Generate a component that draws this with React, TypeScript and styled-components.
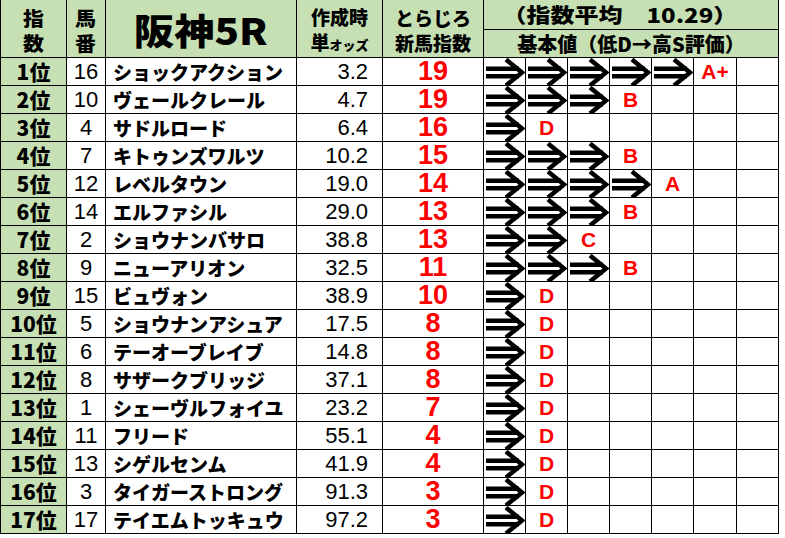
import React from "react";
import styled, { createGlobalStyle } from "styled-components";

const GREEN = "#c6e0b4";
const RED = "#ff0000";
const JP = `"Noto Sans CJK JP", "Noto Sans", sans-serif`;
const NUM = `"Liberation Sans", Arial, sans-serif`;

const GlobalStyle = createGlobalStyle`
  html, body { margin: 0; padding: 0; background: #fff; }
`;

const Sheet = styled.div`
  display: grid;
  grid-template-columns: 65px 38px 190px 85px 100px 41px 41px 41px 41px 41px 42px 41px;
  grid-template-rows: 29px 27px;
  grid-auto-rows: 27px;
  gap: 1px;
  background: #000;
  padding: 0 1px 1px 1px;
  width: max-content;
`;

const Cell = styled.div`
  display: flex;
  align-items: center;
  justify-content: center;
  background: #fff;
  color: #000;
  white-space: nowrap;
  line-height: 1;
`;

const HeadCell = styled(Cell)`
  grid-row: span 2;
  background: ${GREEN};
  flex-direction: column;
  font-family: ${JP};
  font-weight: 900;
  font-size: 19px;
  line-height: 25px;
  padding-top: 3px;
`;

const TitleCell = styled(HeadCell)`
  font-size: 36px;
  line-height: 1;
  padding-top: 0;
`;

const WideHead = styled(Cell)<{ $shift?: number }>`
  grid-column: span 7;
  background: ${GREEN};
  font-family: ${JP};
  font-weight: 900;
  font-size: 20px;
  padding-right: ${(p) => p.$shift ?? 0}px;
`;

const Stretch = styled.span<{ $sx: number; $origin?: string }>`
  display: inline-block;
  transform: scaleX(${(p) => p.$sx});
  transform-origin: ${(p) => p.$origin ?? "center"};
`;

const Small = styled.span`
  font-size: 13px;
`;

const RankCell = styled(Cell)`
  background: ${GREEN};
  font-family: ${JP};
  font-weight: 900;
  font-size: 21px;
`;

const NoCell = styled(Cell)`
  font-family: ${NUM};
  font-size: 22px;
`;

const NameCell = styled(Cell)`
  justify-content: flex-start;
  padding-left: 7px;
  font-family: ${JP};
  font-weight: 900;
  font-size: 19px;
  overflow: hidden;
`;

const OddsCell = styled(Cell)`
  justify-content: flex-end;
  padding-right: 14px;
  font-family: ${NUM};
  font-size: 22px;
`;

const IndexCell = styled(Cell)`
  font-family: ${NUM};
  font-weight: 700;
  font-size: 27px;
  color: ${RED};
`;

const MarkCell = styled(Cell)`
  font-family: ${NUM};
  font-weight: 700;
  font-size: 21px;
  color: ${RED};
  overflow: visible;
`;

const ArrowSvg = styled.svg`
  display: block;
  overflow: visible;
`;

const Arrow = () => (
  <ArrowSvg width="41" height="27" viewBox="0 0 41 27">
    <rect x="2" y="8.5" width="33" height="4.5" fill="#000" />
    <rect x="2" y="16" width="33" height="4.5" fill="#000" />
    <polyline
      points="22,1.5 38,14.5 22,27.5"
      fill="none"
      stroke="#000"
      strokeWidth="4.5"
      strokeLinejoin="miter"
    />
  </ArrowSvg>
);

type Row = {
  no: number;
  name: string;
  odds: string;
  index: number;
  arrows: number;
  grade: string;
};

const rows: Row[] = [
  { no: 16, name: "ショックアクション", odds: "3.2", index: 19, arrows: 5, grade: "A+" },
  { no: 10, name: "ヴェールクレール", odds: "4.7", index: 19, arrows: 3, grade: "B" },
  { no: 4, name: "サドルロード", odds: "6.4", index: 16, arrows: 1, grade: "D" },
  { no: 7, name: "キトゥンズワルツ", odds: "10.2", index: 15, arrows: 3, grade: "B" },
  { no: 12, name: "レベルタウン", odds: "19.0", index: 14, arrows: 4, grade: "A" },
  { no: 14, name: "エルファシル", odds: "29.0", index: 13, arrows: 3, grade: "B" },
  { no: 2, name: "ショウナンバサロ", odds: "38.8", index: 13, arrows: 2, grade: "C" },
  { no: 9, name: "ニューアリオン", odds: "32.5", index: 11, arrows: 3, grade: "B" },
  { no: 15, name: "ビュヴォン", odds: "38.9", index: 10, arrows: 1, grade: "D" },
  { no: 5, name: "ショウナンアシュア", odds: "17.5", index: 8, arrows: 1, grade: "D" },
  { no: 6, name: "テーオーブレイブ", odds: "14.8", index: 8, arrows: 1, grade: "D" },
  { no: 8, name: "サザークブリッジ", odds: "37.1", index: 8, arrows: 1, grade: "D" },
  { no: 1, name: "シェーヴルフォイユ", odds: "23.2", index: 7, arrows: 1, grade: "D" },
  { no: 11, name: "フリード", odds: "55.1", index: 4, arrows: 1, grade: "D" },
  { no: 13, name: "シゲルセンム", odds: "41.9", index: 4, arrows: 1, grade: "D" },
  { no: 3, name: "タイガーストロング", odds: "91.3", index: 3, arrows: 1, grade: "D" },
  { no: 17, name: "テイエムトッキュウ", odds: "97.2", index: 3, arrows: 1, grade: "D" },
];

const MARK_COLS = 7;

export default function App() {
  return (
    <>
      <GlobalStyle />
      <Sheet>
        <HeadCell>
          <Stretch $sx={1.1}>指</Stretch>
          <Stretch $sx={1.1}>数</Stretch>
        </HeadCell>
        <HeadCell>
          <Stretch $sx={1.1}>馬</Stretch>
          <Stretch $sx={1.1}>番</Stretch>
        </HeadCell>
        <TitleCell>
          <Stretch $sx={1.12}>阪神5R</Stretch>
        </TitleCell>
        <HeadCell>
          <span>作成時</span>
          <span>
            単<Small>オッズ</Small>
          </span>
        </HeadCell>
        <HeadCell>
          <span>とらじろ</span>
          <span>新馬指数</span>
        </HeadCell>
        <WideHead $shift={22}>
          <Stretch $sx={1.2}>（指数平均　10.29）</Stretch>
        </WideHead>
        <WideHead>
          <span>基本値（低D→高S評価）</span>
        </WideHead>

        {rows.map((r, i) => (
          <React.Fragment key={i}>
            <RankCell>{i + 1}位</RankCell>
            <NoCell>{r.no}</NoCell>
            <NameCell>{r.name}</NameCell>
            <OddsCell>{r.odds}</OddsCell>
            <IndexCell>{r.index}</IndexCell>
            {Array.from({ length: MARK_COLS }, (_, c) => (
              <MarkCell key={c}>
                {c < r.arrows ? <Arrow /> : c === r.arrows ? r.grade : null}
              </MarkCell>
            ))}
          </React.Fragment>
        ))}
      </Sheet>
    </>
  );
}
